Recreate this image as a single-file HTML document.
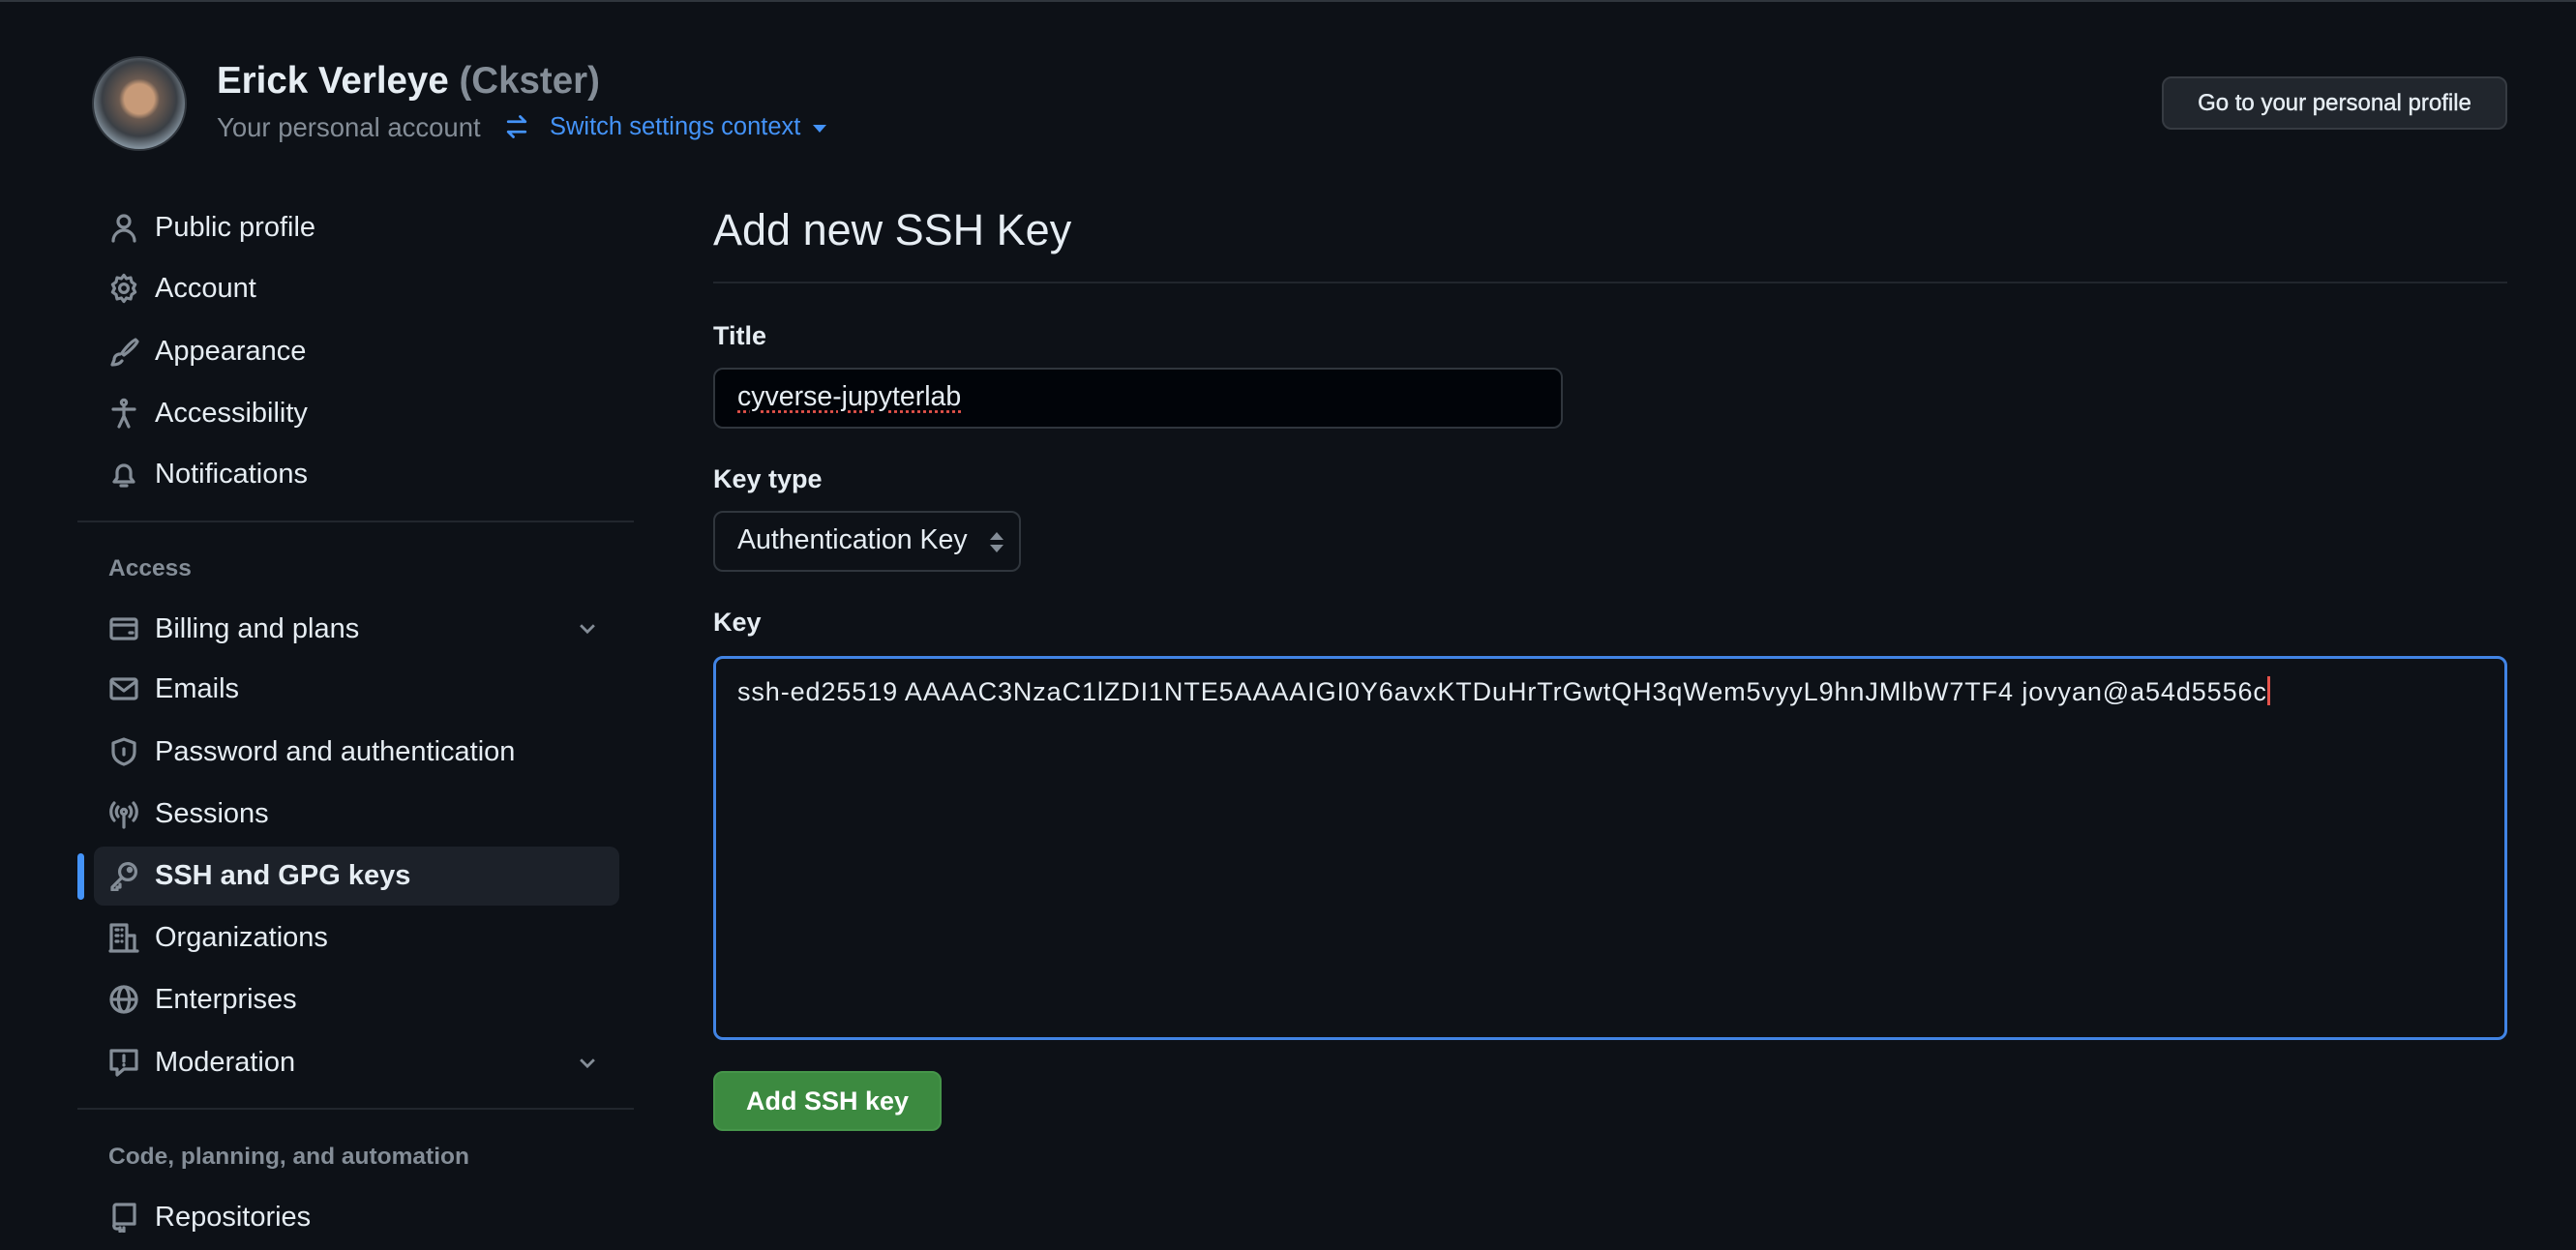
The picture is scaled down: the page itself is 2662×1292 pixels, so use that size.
<!DOCTYPE html>
<html><head><meta charset="utf-8"><style>
*{margin:0;padding:0;box-sizing:border-box}
body{width:2662px;height:1292px;background:#0d1117;font-family:"Liberation Sans",sans-serif;color:#e6edf3;position:relative;overflow:hidden;border-top:2px solid #30363d}
.a{position:absolute;white-space:nowrap}
.nav{position:absolute;left:112px;height:40px;display:flex;align-items:center;font-size:29px;color:#e6edf3}
.nav svg{width:32px;height:32px;margin-right:16px;fill:none;stroke:#848d97;stroke-width:1.6;stroke-linecap:round;stroke-linejoin:round}
.hdr{position:absolute;left:112px;font-size:24.5px;font-weight:bold;color:#848d97}
.sep{position:absolute;left:80px;width:575px;height:2px;background:#21262d}
.lbl{position:absolute;left:737px;font-size:27px;font-weight:bold}
.chev{position:absolute;left:596px;width:22px;height:22px;fill:none;stroke:#848d97;stroke-width:2}
</style></head><body>
<div class="a" style="left:95px;top:56px;width:98px;height:98px;border-radius:50%;background:radial-gradient(circle at 50% 45%,#c79a78 0 22%,#6b5a50 30%,#3a3f45 55%,#8b9aa6 75%);border:2px solid #30363d"></div>
<div class="a" style="left:224px;top:60px;font-size:38.5px;font-weight:bold">Erick Verleye <span style="color:#848d97">(Ckster)</span></div>
<div class="a" style="left:224px;top:114px;font-size:27.5px;color:#848d97">Your personal account</div>
<svg class="a" style="left:520px;top:114px" width="28" height="30" viewBox="0 0 16 16" fill="none" stroke="#4493f8" stroke-width="1.6" stroke-linecap="round" stroke-linejoin="round"><path d="M3 5h10M10 2l3 3M13 11H3M6 14l-3-3"/></svg>
<div class="a" style="left:568px;top:115px;font-size:25.5px;color:#4493f8">Switch settings context</div>
<div class="a" style="left:840px;top:127px;width:0;height:0;border-left:7px solid transparent;border-right:7px solid transparent;border-top:8px solid #4493f8"></div>
<div class="a" style="left:2234px;top:77px;width:357px;height:55px;background:#21262d;border:2px solid #363b42;border-radius:10px;font-size:24px;color:#e6edf3;display:flex;align-items:center;justify-content:center;-webkit-text-stroke:0.4px #e6edf3">Go to your personal profile</div>

<div class="nav" style="top:213px"><svg viewBox="0 0 16 16"><circle cx="8" cy="5" r="3"/><path d="M2.5 15c0-3 2.5-5.5 5.5-5.5s5.5 2.5 5.5 5.5"/></svg>Public profile</div>
<div class="nav" style="top:276px"><svg viewBox="0 0 16 16"><circle cx="8" cy="8" r="2.2"/><path d="M8 1.2l1.3 1.8 2.2-.5.5 2.2 1.8 1.3-1 2 1 2-1.8 1.3-.5 2.2-2.2-.5L8 14.8 6.7 13l-2.2.5-.5-2.2L2.2 10l1-2-1-2L4 4.7l.5-2.2 2.2.5z"/></svg>Account</div>
<div class="nav" style="top:341px"><svg viewBox="0 0 16 16"><path d="M14 2c-2 1-5 4-7 7l1 1c3-2 6-5 7-7zM6 9.5c-2 0-3 1.5-3 3L2 15c2 0 4-.5 5-2"/></svg>Appearance</div>
<div class="nav" style="top:405px"><svg viewBox="0 0 16 16"><circle cx="8" cy="2.5" r="1.3"/><path d="M2.5 6h11M8 4.5v5M5.5 15l2.5-5.5 2.5 5.5"/></svg>Accessibility</div>
<div class="nav" style="top:468px"><svg viewBox="0 0 16 16"><path d="M3 12h10l-1.5-2V7a3.5 3.5 0 0 0-7 0v3zM6.5 14h3"/></svg>Notifications</div>
<div class="sep" style="top:536px"></div>
<div class="hdr" style="top:572px">Access</div>
<div class="nav" style="top:628px"><svg viewBox="0 0 16 16"><rect x="1.5" y="3" width="13" height="10" rx="1"/><path d="M1.5 6h13M11 10h1.5"/></svg>Billing and plans</div>
<svg class="chev" style="top:636px" viewBox="0 0 16 16"><path d="M3 6l5 5 5-5"/></svg>
<div class="nav" style="top:690px"><svg viewBox="0 0 16 16"><rect x="1.5" y="3" width="13" height="10" rx="1"/><path d="M1.5 4l6.5 5 6.5-5"/></svg>Emails</div>
<div class="nav" style="top:755px"><svg viewBox="0 0 16 16"><path d="M8 1.5l5.5 2v4.5c0 3.5-2.5 5.5-5.5 6.5-3-1-5.5-3-5.5-6.5V3.5z"/><path d="M8 6.5v3"/></svg>Password and authentication</div>
<div class="nav" style="top:819px"><svg viewBox="0 0 16 16"><circle cx="8" cy="7" r="1.3"/><path d="M8 8.5V15M5 4.5a4 4 0 0 0 0 5M11 4.5a4 4 0 0 1 0 5M3 2.5a7 7 0 0 0 0 9M13 2.5a7 7 0 0 1 0 9"/></svg>Sessions</div>
<div class="a" style="left:97px;top:873px;width:543px;height:61px;background:#1c2129;border-radius:10px"></div>
<div class="a" style="left:80px;top:880px;width:7px;height:48px;background:#4493f8;border-radius:4px"></div>
<div class="nav" style="top:883px;font-weight:bold"><svg viewBox="0 0 16 16"><circle cx="10" cy="6" r="4.2"/><path d="M7 9l-5 5v1.5h2.5V14H6v-1.5"/><circle cx="11" cy="5" r=".8"/></svg>SSH and GPG keys</div>
<div class="nav" style="top:947px"><svg viewBox="0 0 16 16"><path d="M1.5 15V1.5h8V15M9.5 7h4v8M1 15h14M4 4h1M7 4h0M4 7h1M7 7h0M4 10h1M7 10h0"/></svg>Organizations</div>
<div class="nav" style="top:1011px"><svg viewBox="0 0 16 16"><circle cx="8" cy="8" r="6.5"/><ellipse cx="8" cy="8" rx="2.8" ry="6.5"/><path d="M1.5 8h13"/></svg>Enterprises</div>
<div class="nav" style="top:1076px"><svg viewBox="0 0 16 16"><path d="M1.5 2h13v9.5H8l-3.5 3v-3h-3z"/><path d="M8 4.5v3M8 9.3v.2"/></svg>Moderation</div>
<svg class="chev" style="top:1085px" viewBox="0 0 16 16"><path d="M3 6l5 5 5-5"/></svg>
<div class="sep" style="top:1143px"></div>
<div class="hdr" style="top:1180px">Code, planning, and automation</div>
<div class="nav" style="top:1236px"><svg viewBox="0 0 16 16"><path d="M3 13V2.5A1 1 0 0 1 4 1.5h9.5v10H4a1 1 0 0 0-1 1.5 1 1 0 0 0 1 1h1.5M8 13.5v2l-1-.7-1 .7v-2"/></svg>Repositories</div>

<div class="a" style="left:737px;top:210px;font-size:45px">Add new SSH Key</div>
<div class="a" style="left:737px;top:289px;width:1854px;height:2px;background:#21262d"></div>
<div class="lbl" style="top:330px">Title</div>
<div class="a" style="left:737px;top:378px;width:878px;height:63px;background:#010409;border:2px solid #30363d;border-radius:10px"></div>
<div class="a" style="left:762px;top:392px;font-size:28.5px;text-decoration:underline dotted #e5534b;text-underline-offset:5px">cyverse-jupyterlab</div>
<div class="lbl" style="top:478px">Key type</div>
<div class="a" style="left:737px;top:526px;width:318px;height:63px;border:2px solid #30363d;border-radius:10px;background:#0d1117"></div>
<div class="a" style="left:762px;top:540px;font-size:28.5px">Authentication Key</div>
<div class="a" style="left:1023px;top:548px;width:0;height:0;border-left:7px solid transparent;border-right:7px solid transparent;border-bottom:8px solid #848d97"></div>
<div class="a" style="left:1023px;top:561px;width:0;height:0;border-left:7px solid transparent;border-right:7px solid transparent;border-top:8px solid #848d97"></div>
<div class="lbl" style="top:626px">Key</div>
<div class="a" style="left:737px;top:676px;width:1854px;height:397px;border:3px solid #4184e4;border-radius:10px;background:#0d1117"></div>
<div class="a" style="left:762px;top:697px;font-size:27px;letter-spacing:0.9px">ssh-ed25519 AAAAC3NzaC1lZDI1NTE5AAAAIGI0Y6avxKTDuHrTrGwtQH3qWem5vyyL9hnJMlbW7TF4 jovyan@a54d5556c<span style="display:inline-block;width:3px;height:30px;background:#e5534b;vertical-align:-5px"></span></div>
<div class="a" style="left:737px;top:1105px;width:236px;height:62px;background:#3c8a40;border:2px solid #46954a;border-radius:10px;font-size:27px;font-weight:bold;color:#fff;display:flex;align-items:center;justify-content:center">Add SSH key</div>
</body></html>
